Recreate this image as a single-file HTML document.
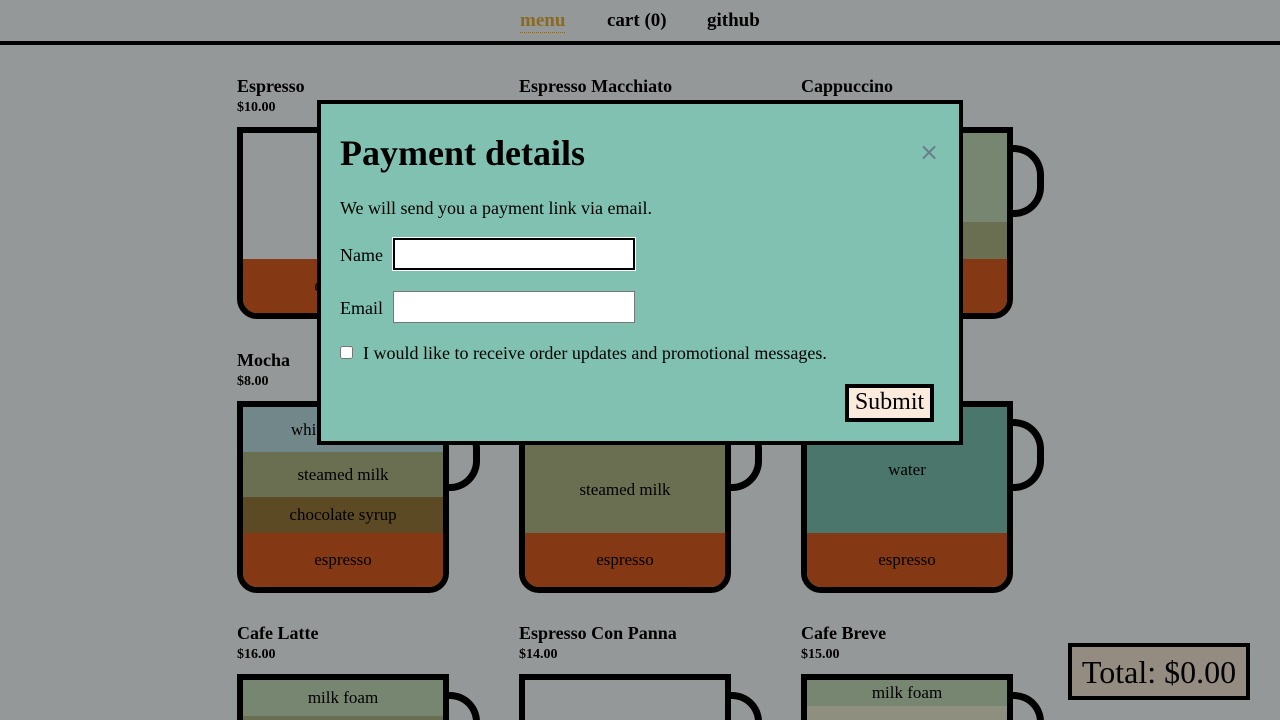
<!DOCTYPE html>
<html><head><style>
*{margin:0;padding:0;box-sizing:border-box}
html,body{width:1280px;height:720px;overflow:hidden}
body{background:#959899;font-family:"Liberation Serif",serif;position:relative;color:#000}
.nav{position:absolute;top:0;left:0;width:1280px;height:45px;border-bottom:4px solid #000}
.nav a{position:absolute;top:10px;font-weight:bold;font-size:19px;color:#000;text-decoration:none}
.item{position:absolute;width:260px}
.item h3{position:absolute;top:0;left:0;font-size:18px;white-space:nowrap;font-weight:bold}
.item .p{position:absolute;top:24px;left:0;font-size:14px;font-weight:bold}
.cup{position:absolute;top:51px;left:0;width:212px;height:192px;border:6px solid #000;border-radius:0 0 20px 20px;overflow:hidden}
.h{position:absolute;top:69px;left:211px;width:32px;height:72px;border:7px solid #000;border-left:none;border-radius:0 30px 30px 0}
.l{position:absolute;left:0;width:200px;display:flex;align-items:center;justify-content:center;font-size:17px}
.e{background:#843814}
.modal{position:absolute;left:317px;top:100px;width:646px;height:345px;background:#81c1b1;border:4px solid #000}
.modal h1{position:absolute;left:19px;top:28px;font-size:36px}
.x{position:absolute;left:598px;top:34px;font-size:24px;color:#6a7d88;font-family:"DejaVu Sans",sans-serif}
.modal .t{position:absolute;left:19px;font-size:18px}
input.i{position:absolute;left:72px;width:242px;height:32px;background:#fff;border:1px solid #777}
.sub{position:absolute;left:524px;top:280px;width:89px;height:38px;background:#fbebdc;border:4px solid #000;font-size:24px;text-align:center;line-height:29px}
.total{position:absolute;left:1068px;top:643px;width:182px;height:57px;background:#948c80;border:4px solid #000;font-size:32px;text-align:center;line-height:50px}
</style></head><body>
<div class="nav">
<a style="left:520px;color:#8a6a1e;border-bottom:1px dotted #8a6a1e">menu</a>
<a style="left:607px">cart (0)</a>
<a style="left:707px">github</a>
</div>

<div class="item" style="left:237px;top:76px"><h3>Espresso</h3><div class="p">$10.00</div><div class="h"></div><div class="cup">
<div class="l e" style="top:126px;height:54px">espresso</div></div></div>
<div class="item" style="left:519px;top:76px"><h3>Espresso Macchiato</h3><div class="p">$12.00</div><div class="h"></div><div class="cup"></div></div>
<div class="item" style="left:801px;top:76px"><h3>Cappuccino</h3><div class="p">$19.00</div><div class="h"></div><div class="cup">
<div class="l" style="top:0;height:89px;background:#778670">milk foam</div>
<div class="l" style="top:89px;height:37px;background:#6b6f52">steamed milk</div>
<div class="l e" style="top:126px;height:54px">espresso</div></div></div>

<div class="item" style="left:237px;top:350px"><h3>Mocha</h3><div class="p">$8.00</div><div class="h"></div><div class="cup">
<div class="l" style="top:0;height:45px;background:#72878a">whipped cream</div>
<div class="l" style="top:45px;height:45px;background:#6b6f52">steamed milk</div>
<div class="l" style="top:90px;height:36px;background:#5c4a24">chocolate syrup</div>
<div class="l e" style="top:126px;height:54px">espresso</div></div></div>
<div class="item" style="left:519px;top:350px"><h3>Flat White</h3><div class="p">$18.00</div><div class="h"></div><div class="cup">
<div class="l" style="top:0;height:126px;background:#6b6f52;padding-top:40px">steamed milk</div>
<div class="l e" style="top:126px;height:54px">espresso</div></div></div>
<div class="item" style="left:801px;top:350px"><h3>Americano</h3><div class="p">$7.00</div><div class="h"></div><div class="cup">
<div class="l" style="top:0;height:126px;background:#4b766c">water</div>
<div class="l e" style="top:126px;height:54px">espresso</div></div></div>

<div class="item" style="left:237px;top:623px"><h3>Cafe Latte</h3><div class="p">$16.00</div><div class="h"></div><div class="cup">
<div class="l" style="top:0;height:36px;background:#778670">milk foam</div>
<div class="l" style="top:36px;height:100px;background:#6b6f52"></div></div></div>
<div class="item" style="left:519px;top:623px"><h3>Espresso Con Panna</h3><div class="p">$14.00</div><div class="h"></div><div class="cup"></div></div>
<div class="item" style="left:801px;top:623px"><h3>Cafe Breve</h3><div class="p">$15.00</div><div class="h"></div><div class="cup">
<div class="l" style="top:0;height:26px;background:#778670">milk foam</div>
<div class="l" style="top:26px;height:100px;background:#8f8f80"></div></div></div>

<div class="modal">
<h1>Payment details</h1>
<div class="x">×</div>
<div class="t" style="top:94px">We will send you a payment link via email.</div>
<div class="t" style="top:141px">Name</div>
<input class="i" style="top:134px;border:2px solid #000;outline:1px solid #fff">
<div class="t" style="top:194px">Email</div>
<input class="i" style="top:187px">
<input type="checkbox" style="position:absolute;left:19px;top:242px;width:13px;height:13px">
<div class="t" style="left:42px;top:239px;font-size:18px">I would like to receive order updates and promotional messages.</div>
<div class="sub">Submit</div>
</div>
<div class="total">Total: $0.00</div>
</body></html>
